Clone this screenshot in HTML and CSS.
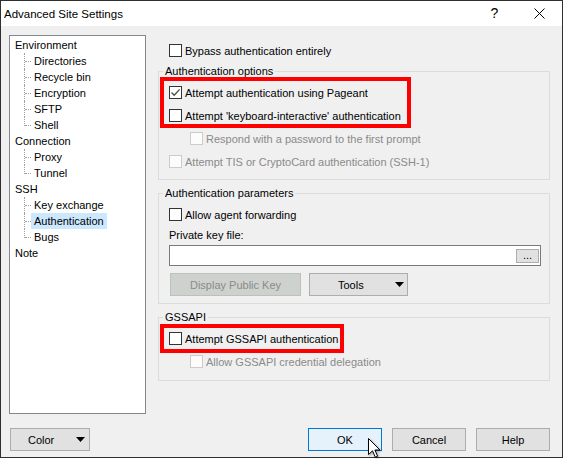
FILE: index.html
```html
<!DOCTYPE html>
<html lang="en">
<head>
<meta charset="utf-8">
<title>Advanced Site Settings</title>
<link rel="stylesheet" href="styles.css">
</head>
<body>
<div class="window">
  <header class="titlebar">
    <span class="title">Advanced Site Settings</span>
    <span class="caption-btn help-glyph">?</span>
    <span class="caption-btn">
      <svg width="11" height="11" viewBox="0 0 11 11"><path d="M0.5 0.5L10.5 10.5M10.5 0.5L0.5 10.5" stroke="#000" stroke-width="1" fill="none"/></svg>
    </span>
  </header>

  <div class="dialog">
    <div class="main">
      <nav class="tree">
        <ul class="tree-root">
          <li><span class="node">Environment</span>
            <ul class="tree-children">
              <li><span class="node">Directories</span></li>
              <li><span class="node">Recycle bin</span></li>
              <li><span class="node">Encryption</span></li>
              <li><span class="node">SFTP</span></li>
              <li><span class="node">Shell</span></li>
            </ul>
          </li>
          <li><span class="node">Connection</span>
            <ul class="tree-children">
              <li><span class="node">Proxy</span></li>
              <li><span class="node">Tunnel</span></li>
            </ul>
          </li>
          <li><span class="node">SSH</span>
            <ul class="tree-children">
              <li><span class="node">Key exchange</span></li>
              <li><span class="node selected">Authentication</span></li>
              <li><span class="node">Bugs</span></li>
            </ul>
          </li>
          <li><span class="node">Note</span></li>
        </ul>
      </nav>

      <section class="pane">
        <div class="check-row top-row"><span class="box"></span><span>Bypass authentication entirely</span></div>

        <fieldset class="group group-options">
          <legend>Authentication options</legend>
          <div class="mark mark-options">
            <div class="check-row">
              <span class="box">
                <svg width="11" height="11" viewBox="0 0 11 11"><path d="M1.5 5.5L4.2 8.3L9.6 2.4" stroke="#4a4a4a" stroke-width="1.3" fill="none"/></svg>
              </span>
              <span>Attempt authentication using Pageant</span>
            </div>
            <div class="check-row"><span class="box"></span><span>Attempt 'keyboard-interactive' authentication</span></div>
          </div>
          <div class="check-row indent disabled"><span class="box"></span><span>Respond with a password to the first prompt</span></div>
          <div class="check-row disabled"><span class="box"></span><span>Attempt TIS or CryptoCard authentication (SSH-1)</span></div>
        </fieldset>

        <fieldset class="group group-params">
          <legend>Authentication parameters</legend>
          <div class="check-row"><span class="box"></span><span>Allow agent forwarding</span></div>
          <div class="field-label">Private key file:</div>
          <div class="file-input"><span class="btn browse-btn">...</span></div>
          <div class="key-buttons">
            <span class="btn btn-disabled pubkey-btn">Display Public Key</span>
            <span class="btn tools-btn">Tools
              <svg class="caret" width="9" height="5" viewBox="0 0 9 5"><path d="M0 0H9L4.5 5Z" fill="#000"/></svg>
            </span>
          </div>
        </fieldset>

        <fieldset class="group group-gssapi">
          <legend>GSSAPI</legend>
          <div class="mark mark-gssapi">
            <div class="check-row"><span class="box"></span><span>Attempt GSSAPI authentication</span></div>
          </div>
          <div class="check-row indent disabled"><span class="box"></span><span>Allow GSSAPI credential delegation</span></div>
        </fieldset>
      </section>
    </div>

    <footer class="footer">
      <span class="btn color-btn">Color
        <svg class="caret" width="9" height="5" viewBox="0 0 9 5"><path d="M0 0H9L4.5 5Z" fill="#000"/></svg>
      </span>
      <div class="footer-actions">
        <span class="btn btn-default">OK</span>
        <span class="btn">Cancel</span>
        <span class="btn">Help</span>
      </div>
    </footer>
  </div>

  <svg class="pointer" width="14" height="21" viewBox="0 0 14 21">
    <path d="M0.5 0.5V16.5L4.5 12.8L7.3 19.2L9.6 18.2L6.9 12H12Z" fill="#fff" stroke="#000" stroke-width="1" stroke-linejoin="miter"/>
  </svg>
</div>
</body>
</html>
```

FILE: styles.css
```css
* {
  box-sizing: border-box;
}

html,
body {
  margin: 0;
  padding: 0;
  background: #ffffff;
}

body {
  width: 563px;
  height: 459px;
  overflow: hidden;
  font-family: "Liberation Sans", Arial, sans-serif;
  font-size: 11px;
  color: #000000;
}

/* dialog frame */
.window {
  position: relative;
  width: 563px;
  height: 458px;
  border: 1px solid #2f2f2f;
  background: #f0f0f0;
  display: flex;
  flex-direction: column;
}

.titlebar {
  flex: none;
  height: 25px;
  background: #ffffff;
  display: flex;
  align-items: center;
}

.title {
  flex: 1;
  padding-left: 3px;
  font-size: 11.5px;
}

.caption-btn {
  width: 45px;
  height: 25px;
  display: flex;
  align-items: center;
  justify-content: center;
}

.help-glyph {
  font-size: 14px;
  padding-bottom: 1px;
}

.dialog {
  flex: 1;
  display: flex;
  flex-direction: column;
  padding: 9px 12px 0 8px;
}

.main {
  display: flex;
  height: 379px;
}

/* navigation tree */
.tree {
  width: 137px;
  flex: none;
  border: 1px solid #828790;
  background: #ffffff;
  padding: 1px 0 0 2px;
}

.tree ul {
  list-style: none;
  margin: 0;
  padding: 0;
}

.node {
  display: block;
  width: fit-content;
  height: 16px;
  line-height: 16px;
  padding: 0 3px;
  white-space: nowrap;
}

.node.selected {
  background: #cce8ff;
}

.tree-children {
  padding-left: 19px !important;
}

.tree-children > li {
  position: relative;
}

.tree-children > li::before {
  content: "";
  position: absolute;
  left: -7px;
  top: 0;
  bottom: 0;
  border-left: 1px dotted #a0a0a0;
}

.tree-children > li:last-child::before {
  bottom: auto;
  height: 9px;
}

.tree-children > li::after {
  content: "";
  position: absolute;
  left: -6px;
  top: 8px;
  width: 6px;
  border-top: 1px dotted #a0a0a0;
}

/* settings pane */
.pane {
  flex: 1;
  margin-left: 12px;
  display: flex;
  flex-direction: column;
}

.check-row {
  display: flex;
  align-items: center;
  gap: 3px;
  height: 21px;
  white-space: nowrap;
}

.check-row + .check-row,
.mark + .check-row {
  margin-top: 2px;
}

.top-row {
  margin: 5px 0 0 11px;
}

.box {
  flex: none;
  width: 13px;
  height: 13px;
  border: 1px solid #333333;
  background: #ffffff;
  display: flex;
  align-items: center;
  justify-content: center;
}

.disabled {
  color: #8a8a8a;
}

.disabled .box {
  border-color: #cccccc;
  background: #fcfcfc;
}

.indent {
  padding-left: 21px;
}

.group {
  margin: 0;
  min-width: 0;
  border: 1px solid #dcdcdc;
  padding: 4px 8px 7px 10px;
}

.group legend {
  padding: 0 2px;
  margin-left: -6px;
  line-height: 14px;
}

.group-options {
  margin-top: 3px;
}

.group-params {
  margin-top: 6px;
}

.group-gssapi {
  margin-top: 6px;
  padding-bottom: 8px;
}

/* red call-out frames */
.mark {
  position: relative;
}

.mark::after {
  content: "";
  position: absolute;
  border: 4px solid #ff0000;
  left: -9px;
  right: -9px;
}

.mark-options {
  width: 233px;
}

.mark-options::after {
  top: -5px;
  bottom: -2px;
}

.mark-gssapi {
  width: 166px;
}

.mark-gssapi::after {
  top: -4px;
  bottom: -4px;
}

.field-label {
  margin-top: 3px;
  line-height: 14px;
}

.file-input {
  margin-top: 3px;
  height: 21px;
  border: 1px solid #7a7a7a;
  background: #ffffff;
  display: flex;
  align-items: center;
  justify-content: flex-end;
  padding-right: 1px;
}

/* push buttons */
.btn {
  height: 23px;
  border: 1px solid #adadad;
  background: #e1e1e1;
  display: flex;
  align-items: center;
  justify-content: center;
  white-space: nowrap;
}

.browse-btn {
  width: 23px;
  height: 14px;
  line-height: 10px;
  align-items: flex-end;
  padding-bottom: 2px;
  font-size: 11px;
}

.key-buttons {
  margin-top: 7px;
  display: flex;
  gap: 8px;
}

.pubkey-btn {
  margin-left: 1px;
  width: 131px;
}

.btn-disabled {
  background: #ced2ce;
  border-color: #bcc1bc;
  color: #8a8a8a;
}

.tools-btn {
  width: 99px;
  justify-content: flex-start;
  padding: 0 3px 0 28px;
}

.caret {
  margin-left: auto;
  flex: none;
}

.footer {
  margin-top: 14px;
  display: flex;
  align-items: center;
}

.color-btn {
  margin-left: 1px;
  width: 80px;
  justify-content: flex-start;
  padding: 0 4px 0 17px;
}

.footer-actions {
  margin-left: auto;
  display: flex;
  gap: 10px;
}

.footer-actions .btn {
  width: 74px;
}

.btn-default {
  border-color: #0078d7;
  background: #e5f1fb;
}

/* mouse pointer resting on the OK button */
.pointer {
  position: absolute;
  left: 367px;
  top: 437px;
  filter: drop-shadow(1px 1px 1px rgba(0, 0, 0, 0.35));
}
```
